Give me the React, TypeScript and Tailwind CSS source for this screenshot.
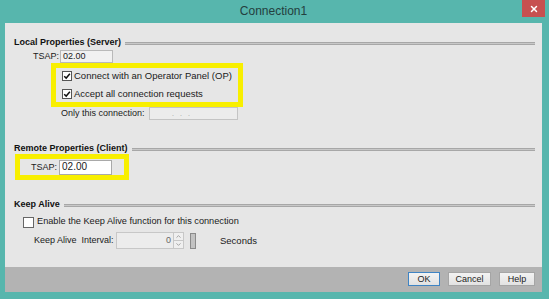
import { ChevronUp, ChevronDown, X } from 'lucide-react';

function Check({ checked }: { checked?: boolean }) {
    return (
        <span className="flex h-[10px] w-[10px] shrink-0 items-center justify-center border border-[#555] bg-white">
            {checked && (
                <svg viewBox="0 0 10 10" className="h-[8px] w-[8px]">
                    <path d="M1.5 5.2 L4 7.6 L8.6 2.2" fill="none" stroke="#111" strokeWidth="1.8" />
                </svg>
            )}
        </span>
    );
}

function Heading({ title }: { title: string }) {
    return (
        <div className="flex h-[12px] items-center gap-[4px] pl-[9px] pr-[7px]">
            <span className="whitespace-nowrap font-bold leading-none text-[#111]">{title}</span>
            <div className="mt-[2px] h-[3px] flex-1 border-y border-[#a7a7a7] bg-[#c8c8c8]" />
        </div>
    );
}

function Btn({ label, primary }: { label: string; primary?: boolean }) {
    return (
        <button
            type="button"
            className={`flex h-[14px] items-center justify-center border bg-gradient-to-b from-[#f3f3f3] to-[#e2e2e2] text-[9px] leading-none text-[#222] ${primary ? 'w-[32px] border-[#3f84c4]' : 'border-[#a5a5a5]'} ${label === 'Cancel' ? 'w-[43px]' : ''} ${label === 'Help' ? 'w-[36px]' : ''}`}
        >
            {label}
        </button>
    );
}

export default function App() {
    return (
        <div
            className="flex h-[299px] w-[549px] flex-col bg-[#57b6ad] pb-[7px] pl-[5px] pr-[7px] text-[9px] text-[#1a1a1a]"
            style={{ fontFamily: '"Liberation Sans", Arial, sans-serif' }}
        >
            <div className="relative flex h-[23px] items-center justify-center">
                <span className="pb-[1px] text-[12px] text-[#24403e]">Connection1</span>
                <div className="absolute right-[-3px] top-0 flex h-[17px] w-[23px] items-center justify-center bg-[#c75050]">
                    <X size={10} strokeWidth={3.5} className="text-white" />
                </div>
            </div>

            <div className="flex h-[244px] flex-col whitespace-nowrap bg-[#e6e6e6] pt-[13px]">
                <Heading title="Local Properties (Server)" />

                <div className="mt-[2px] flex h-[13px] items-center">
                    <span className="w-[54px] text-right leading-none">TSAP:</span>
                    <div className="ml-[1px] flex h-[13px] w-[53px] items-center border border-[#b9b9b9] bg-[#f1f1f1] px-[2px] leading-none">02.00</div>
                </div>

                <div className="ml-[46px] flex h-[44px] w-[192px] flex-col justify-center gap-[8px] border-[5px] border-[#f8ef00] pl-[6px]">
                    <div className="flex items-center gap-[2px]">
                        <Check checked />
                        <span className="text-[9.5px] leading-none">Connect with an Operator Panel (OP)</span>
                    </div>
                    <div className="flex items-center gap-[2px]">
                        <Check checked />
                        <span className="text-[9.5px] leading-none">Accept all connection requests</span>
                    </div>
                </div>

                <div className="flex h-[13px] items-center pl-[56px]">
                    <span className="w-[88px] leading-none">Only this connection:</span>
                    <div className="flex h-[13px] w-[89px] items-center gap-[6px] border border-[#c4c4c4] bg-[#ececec] pl-[22px] text-[7px] leading-none text-[#999]">
                        <span>.</span>
                        <span>.</span>
                        <span>.</span>
                    </div>
                </div>

                <div className="mt-[22px]">
                    <Heading title="Remote Properties (Client)" />
                </div>

                <div className="ml-[10px] flex h-[26px] w-[114px] items-center border-[5px] border-[#f8ef00] pl-[11px]">
                    <span className="leading-none">TSAP:</span>
                    <div className="ml-[2px] flex h-[15px] w-[53px] items-center border border-[#a9a9a9] bg-white px-[2px] text-[10px] leading-none">02.00</div>
                </div>

                <div className="mt-[18px]">
                    <Heading title="Keep Alive" />
                </div>

                <div className="mt-[5px] flex h-[14px] items-center gap-[3px] pl-[18px]">
                    <span className="flex h-[11px] w-[11px] border border-[#666] bg-white" />
                    <span className="text-[9.2px] leading-none">Enable the Keep Alive function for this connection</span>
                </div>

                <div className="mt-[3px] flex h-[17px] items-center pl-[29px]">
                    <span className="w-[82px] whitespace-pre leading-none">Keep Alive  Interval:</span>
                    <div className="flex h-[17px] w-[58px] items-center justify-end border border-[#c7c7c7] bg-[#ececec] pr-[2px] leading-none text-[#666]">0</div>
                    <div className="flex h-[17px] w-[10px] flex-col border border-l-0 border-[#c7c7c7] bg-[#efefef]">
                        <div className="flex flex-1 items-center justify-center border-b border-[#c7c7c7]">
                            <ChevronUp size={7} strokeWidth={3} className="text-[#999]" />
                        </div>
                        <div className="flex flex-1 items-center justify-center">
                            <ChevronDown size={7} strokeWidth={3} className="text-[#999]" />
                        </div>
                    </div>
                    <div className="ml-[6px] h-[16px] w-[6px] border border-[#8a8a8a] bg-[#c2c2c2]" />
                    <span className="ml-[24px] text-[9.5px] leading-none">Seconds</span>
                </div>
            </div>

            <div className="flex h-[25px] items-start justify-end gap-[8px] bg-[#b3b3b3] pr-[7px] pt-[5px]">
                <Btn label="OK" primary />
                <Btn label="Cancel" />
                <Btn label="Help" />
            </div>
        </div>
    );
}
